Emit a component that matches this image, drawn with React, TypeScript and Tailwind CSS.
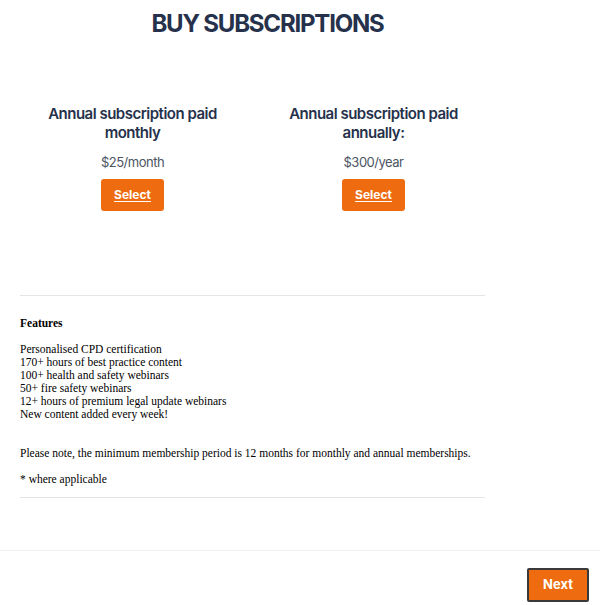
import React from "react";

const sans = { fontFamily: "Inter, 'Noto Sans', sans-serif" };

function Card({ title, price }: { title: React.ReactNode; price: string }) {
  return (
    <div className="w-[241px] flex flex-col items-center text-center">
      <h2 className="text-[15px] leading-[19px] font-semibold tracking-[-0.5px] text-[#26314b] w-[200px]">{title}</h2>
      <p className="mt-[12px] text-[13px] leading-[16px] tracking-[-0.5px] text-[#4b5563]">{price}</p>
      <button className="mt-[9px] w-[63px] h-[32px] rounded-[3px] bg-[#ee6c0f] text-white text-[12px] font-bold underline underline-offset-2">
        Select
      </button>
    </div>
  );
}

export default function App() {
  const serif = { fontFamily: "'Liberation Serif', 'Times New Roman', serif" };
  return (
    <div className="w-[600px] h-[605px] bg-white flex flex-col" style={sans}>
      <div className="flex-1">
        <div className="pr-[65px] pt-[10px] text-center">
          <h1 className="text-[24px] leading-[28px] font-bold text-[#26314b] tracking-[-1.2px]">BUY SUBSCRIPTIONS</h1>
        </div>
        <div className="ml-[12px] mt-[66px] flex">
          <Card title={<>Annual subscription paid monthly</>} price="$25/month" />
          <Card title={<>Annual subscription paid annually:</>} price="$300/year" />
        </div>
        <div className="mx-[20px] w-[465px] mt-[84px] border-t border-[#e5e5e5]" />
        <div className="mx-[20px] w-[465px] text-[11.5px] leading-[13px] text-black" style={serif}>
          <p className="mt-[21px] font-bold">Features</p>
          <div className="mt-[13px]">
            <div>Personalised CPD certification</div>
            <div>170+ hours of best practice content</div>
            <div>100+ health and safety webinars</div>
            <div>50+ fire safety webinars</div>
            <div>12+ hours of premium legal update webinars</div>
            <div>New content added every week!</div>
          </div>
          <p className="mt-[26px] whitespace-nowrap">Please note, the minimum membership period is 12 months for monthly and annual memberships.</p>
          <p className="mt-[13px]">* where applicable</p>
        </div>
        <div className="mx-[20px] w-[465px] mt-[11px] border-t border-[#e5e5e5]" />
      </div>
      <div className="border-t border-[#f0f0f0] h-[55px] flex justify-end items-start pt-[17px] pr-[11px]">
        <button className="w-[62px] h-[34px] bg-[#ee6c0f] border-2 border-[#3a3a3a] rounded-[2px] text-white text-[13px] font-bold">
          Next
        </button>
      </div>
    </div>
  );
}
